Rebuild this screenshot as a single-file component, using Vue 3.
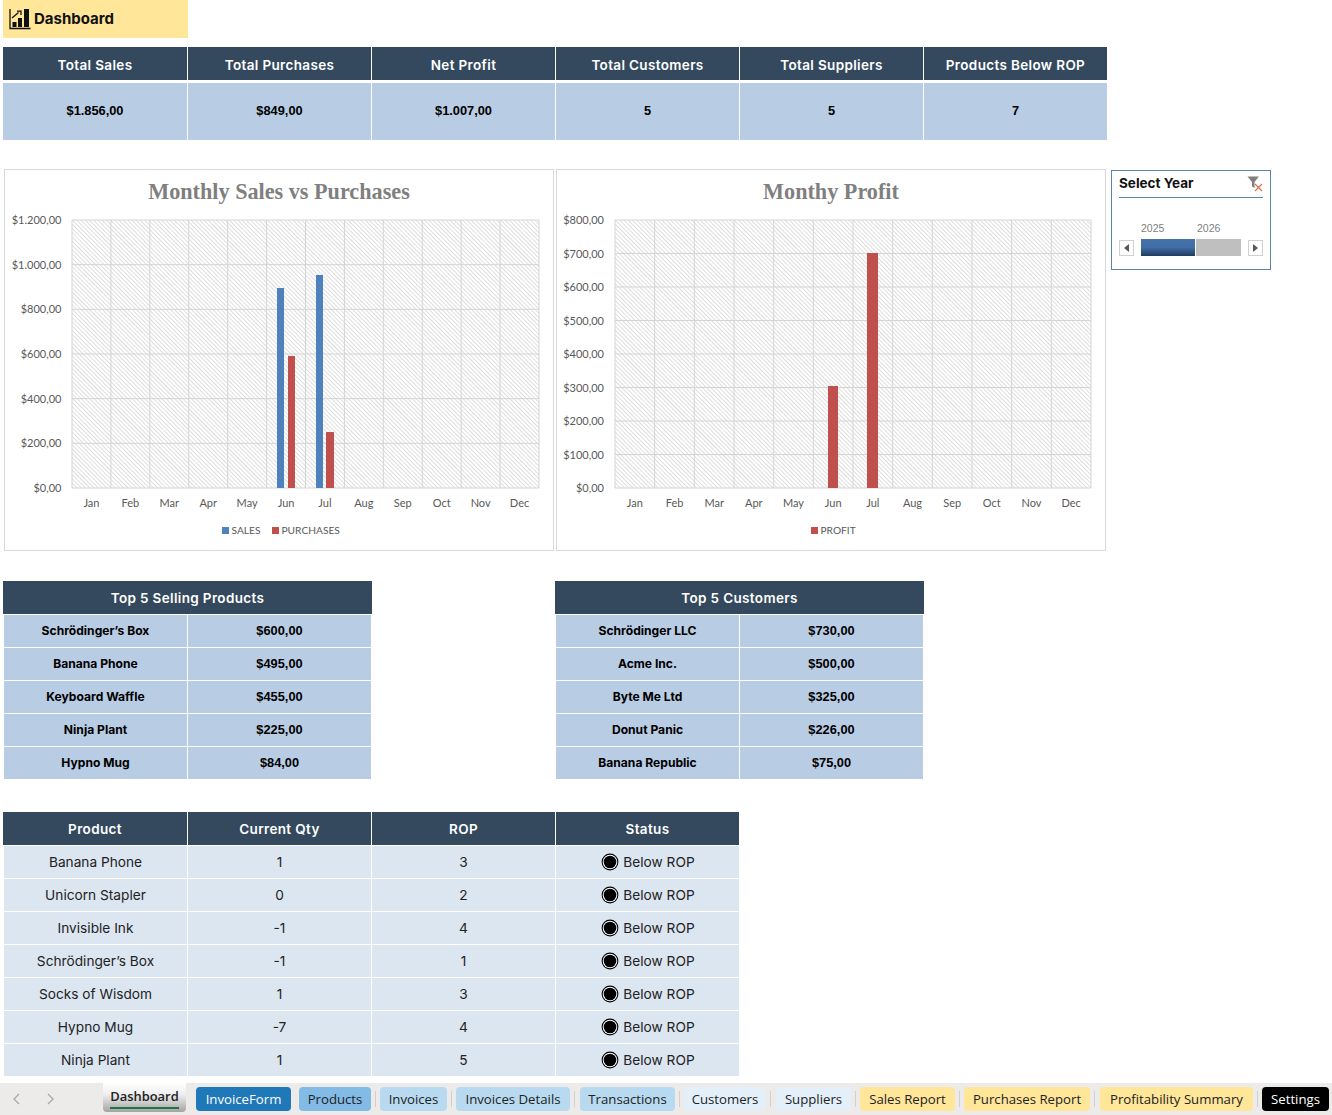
<script setup>
const kpiHead = ['Total Sales', 'Total Purchases', 'Net Profit', 'Total Customers', 'Total Suppliers', 'Products Below ROP']
const kpiVals = ['$1.856,00', '$849,00', '$1.007,00', '5', '5', '7']
const months = ['Jan', 'Feb', 'Mar', 'Apr', 'May', 'Jun', 'Jul', 'Aug', 'Sep', 'Oct', 'Nov', 'Dec']

function buildChart(left, right, labels) {
  const top = 220
  const bottom = 488
  const colW = (right - left) / 12
  const step = (bottom - top) / (labels.length - 1)
  return {
    left, right, top, bottom,
    vLines: Array.from({ length: 13 }, (_, i) => left + i * colW),
    hLines: labels.map((l, i) => ({ y: top + i * step, label: l })),
    months: months.map((m, i) => ({ m, x: left + (i + 0.5) * colW }))
  }
}
const c1 = buildChart(72, 539, ['$1.200,00', '$1.000,00', '$800,00', '$600,00', '$400,00', '$200,00', '$0,00'])
const c2 = buildChart(615, 1091, ['$800,00', '$700,00', '$600,00', '$500,00', '$400,00', '$300,00', '$200,00', '$100,00', '$0,00'])

const bars1 = [
  { x: 277, w: 7, y: 288, c: '#4F81BD' },
  { x: 288, w: 7, y: 356, c: '#C0504D' },
  { x: 316, w: 7, y: 275, c: '#4F81BD' },
  { x: 326, w: 8, y: 432, c: '#C0504D' }
]
const bars2 = [
  { x: 828, w: 10, y: 386, c: '#C0504D' },
  { x: 867, w: 11, y: 253, c: '#C0504D' }
]

const topProducts = [
  ['Schrödinger’s Box', '$600,00'], ['Banana Phone', '$495,00'], ['Keyboard Waffle', '$455,00'],
  ['Ninja Plant', '$225,00'], ['Hypno Mug', '$84,00']
]
const topCustomers = [
  ['Schrödinger LLC', '$730,00'], ['Acme Inc.', '$500,00'], ['Byte Me Ltd', '$325,00'],
  ['Donut Panic', '$226,00'], ['Banana Republic', '$75,00']
]
const stock = [
  ['Banana Phone', '1', '3'], ['Unicorn Stapler', '0', '2'], ['Invisible Ink', '-1', '4'],
  ['Schrödinger’s Box', '-1', '1'], ['Socks of Wisdom', '1', '3'], ['Hypno Mug', '-7', '4'], ['Ninja Plant', '1', '5']
]
const tabs = [
  { t: 'InvoiceForm', w: 95, cls: 'blue', gap: 8 },
  { t: 'Products', w: 72, cls: 'mid', gap: 9 },
  { t: 'Invoices', w: 67, cls: 'pale', gap: 9 },
  { t: 'Invoices Details', w: 114, cls: 'pale', gap: 10 },
  { t: 'Transactions', w: 95, cls: 'pale', gap: 9 },
  { t: 'Customers', w: 82, cls: 'faint', gap: 10 },
  { t: 'Suppliers', w: 75, cls: 'faint', gap: 9 },
  { t: 'Sales Report', w: 95, cls: 'gold', gap: 9 },
  { t: 'Purchases Report', w: 126, cls: 'gold', gap: 10 },
  { t: 'Profitability Summary', w: 153, cls: 'gold', gap: 9 },
  { t: 'Settings', w: 67, cls: 'black', gap: 0 }
]
</script>

<template>
  <div class="page">
    <div class="title">
      <svg class="title-icon" viewBox="0 0 22 22" width="22" height="22">
        <path d="M1 1V20.5H21.5" fill="none" stroke="#111" stroke-width="1.3" />
        <rect x="3.5" y="14" width="4" height="5" fill="#111" />
        <rect x="9" y="10" width="4" height="9" fill="#111" />
        <rect x="15" y="1" width="5" height="18" fill="#111" />
        <path d="M3 10L9.5 4.5" fill="none" stroke="#111" stroke-width="1.3" />
        <path d="M8 3.2H12V7" fill="none" stroke="#111" stroke-width="1.3" />
      </svg>
      <span>Dashboard</span>
    </div>

    <div class="kpi">
      <div v-for="h in kpiHead" :key="h" class="head kpi-head">{{ h }}</div>
      <div v-for="(v, i) in kpiVals" :key="i" class="kpi-val">{{ v }}</div>
    </div>

    <div class="charts">
      <div class="chart">
        <svg viewBox="4 169 550 382" width="550" height="382">
          <defs>
            <pattern id="hatch1" width="3" height="3" patternUnits="userSpaceOnUse" patternTransform="rotate(-45)">
              <rect width="3" height="3" fill="#fff" />
              <rect x="0" width="1" height="3" fill="#dedede" />
            </pattern>
          </defs>
          <text x="279" y="199" class="ch-title" text-anchor="middle">Monthly Sales vs Purchases</text>
          <rect :x="c1.left" :y="c1.top" :width="c1.right - c1.left" :height="c1.bottom - c1.top" fill="url(#hatch1)" />
          <line v-for="x in c1.vLines" :key="x" :x1="x" :x2="x" :y1="c1.top" :y2="c1.bottom" class="grid" />
          <line v-for="h in c1.hLines" :key="h.y" :x1="c1.left" :x2="c1.right" :y1="h.y" :y2="h.y" class="grid" />
          <text v-for="h in c1.hLines" :key="h.label" x="61.5" :y="h.y + 4" class="ax" text-anchor="end">{{ h.label }}</text>
          <text v-for="m in c1.months" :key="m.m" :x="m.x" y="507" class="ax" text-anchor="middle">{{ m.m }}</text>
          <rect v-for="b in bars1" :key="b.x" :x="b.x" :y="b.y" :width="b.w" :height="c1.bottom - b.y" :fill="b.c" />
          <rect x="222" y="527" width="7" height="7" fill="#4F81BD" />
          <text x="231.5" y="534" class="ax leg">SALES</text>
          <rect x="272" y="527" width="7" height="7" fill="#C0504D" />
          <text x="281.5" y="534" class="ax leg">PURCHASES</text>
        </svg>
      </div>
      <div class="chart">
        <svg viewBox="556 169 550 382" width="550" height="382">
          <defs>
            <pattern id="hatch2" width="3" height="3" patternUnits="userSpaceOnUse" patternTransform="rotate(-45)">
              <rect width="3" height="3" fill="#fff" />
              <rect x="0" width="1" height="3" fill="#dedede" />
            </pattern>
          </defs>
          <text x="831" y="199" class="ch-title" text-anchor="middle">Monthy Profit</text>
          <rect :x="c2.left" :y="c2.top" :width="c2.right - c2.left" :height="c2.bottom - c2.top" fill="url(#hatch2)" />
          <line v-for="x in c2.vLines" :key="x" :x1="x" :x2="x" :y1="c2.top" :y2="c2.bottom" class="grid" />
          <line v-for="h in c2.hLines" :key="h.y" :x1="c2.left" :x2="c2.right" :y1="h.y" :y2="h.y" class="grid" />
          <text v-for="h in c2.hLines" :key="h.label" x="604" :y="h.y + 4" class="ax" text-anchor="end">{{ h.label }}</text>
          <text v-for="m in c2.months" :key="m.m" :x="m.x" y="507" class="ax" text-anchor="middle">{{ m.m }}</text>
          <rect v-for="b in bars2" :key="b.x" :x="b.x" :y="b.y" :width="b.w" :height="c2.bottom - b.y" :fill="b.c" />
          <rect x="811" y="527" width="7" height="7" fill="#C0504D" />
          <text x="820.5" y="534" class="ax leg">PROFIT</text>
        </svg>
      </div>
      <div class="slicer">
        <div class="sl-head">
          <span>Select Year</span>
          <svg width="16" height="17" viewBox="0 0 16 17">
            <path d="M0.5 0.5H12L7.5 6V12L5 10.5V6Z" fill="#808080" />
            <path d="M8 8L15 15M15 8L8 15" stroke="#D9734A" stroke-width="1.2" fill="none" />
          </svg>
        </div>
        <div class="sl-years"><span class="y1">2025</span><span class="y2">2026</span></div>
        <div class="sl-track">
          <div class="sl-btn"><span class="tri-l"></span></div>
          <div class="sl-on"></div>
          <div class="sl-off"></div>
          <div class="sl-btn"><span class="tri-r"></span></div>
        </div>
      </div>
    </div>

    <div class="tops">
      <div class="top5">
        <div class="head span2">Top 5 Selling Products</div>
        <template v-for="r in topProducts" :key="r[0]">
          <div class="cell strong">{{ r[0] }}</div>
          <div class="cell money">{{ r[1] }}</div>
        </template>
      </div>
      <div class="top5">
        <div class="head span2">Top 5 Customers</div>
        <template v-for="r in topCustomers" :key="r[0]">
          <div class="cell strong">{{ r[0] }}</div>
          <div class="cell money">{{ r[1] }}</div>
        </template>
      </div>
    </div>

    <div class="stock">
      <div class="head">Product</div>
      <div class="head">Current Qty</div>
      <div class="head">ROP</div>
      <div class="head last">Status</div>
      <template v-for="r in stock" :key="r[0]">
        <div class="row">{{ r[0] }}</div>
        <div class="row">{{ r[1] }}</div>
        <div class="row">{{ r[2] }}</div>
        <div class="row status">
          <svg width="18" height="18" viewBox="0 0 18 18">
            <circle cx="9" cy="9" r="8.4" fill="#000" />
            <circle cx="9" cy="9" r="7.3" fill="#fff" />
            <circle cx="9" cy="9" r="6.3" fill="#000" />
          </svg>
          <span>Below ROP</span>
        </div>
      </template>
    </div>

    <div class="tabbar">
      <div class="nav">
        <svg width="10" height="12" viewBox="0 0 10 12"><path d="M7 1L2 6L7 11" fill="none" stroke="#a6a6a6" stroke-width="1.2" /></svg>
        <svg width="10" height="12" viewBox="0 0 10 12"><path d="M3 1L8 6L3 11" fill="none" stroke="#a6a6a6" stroke-width="1.2" /></svg>
      </div>
      <div class="tab-active"><span>Dashboard</span></div>
      <div class="tab-list">
        <div
          v-for="t in tabs"
          :key="t.t"
          class="tab"
          :class="t.cls"
          :style="{ width: t.w + 'px', marginRight: t.gap + 'px' }"
        >{{ t.t }}</div>
      </div>
    </div>
  </div>
</template>

<style scoped>
.page {
  width: 1332px;
  height: 1115px;
  display: flex;
  flex-direction: column;
  overflow: hidden;
  background: #fff;
  font-family: Inter, "Noto Sans", sans-serif;
}
.title {
  margin-left: 3px;
  width: 185px;
  height: 38px;
  background: #FFE699;
  display: flex;
  align-items: center;
  gap: 3px;
  padding-left: 6px;
  padding-bottom: 1px;
  box-sizing: border-box;
  font: 700 15px Inter, sans-serif;
  color: #111;
}
.title-icon { flex: none; }
.kpi {
  margin: 9px 0 0 3px;
  display: grid;
  grid-template-columns: 185px 184px 184px 184px 184px 183px;
  grid-template-rows: 33px 60px;
}
.head {
  background: #34495E;
  color: #fff;
  font: 600 13.5px Inter, sans-serif;
  letter-spacing: 0.35px;
  display: flex;
  align-items: center;
  justify-content: center;
  border-right: 1px solid #fff;
  box-sizing: border-box;
}
.kpi-head { padding-top: 2px; }
.kpi-head:nth-child(6), .head.last { border-right: 0; }
.kpi-val {
  background: #B8CCE4;
  margin-top: 3px;
  padding-bottom: 3px;
  box-sizing: border-box;
  border-right: 1px solid #fff;
  display: flex;
  align-items: center;
  justify-content: center;
  font: 700 12.8px "Liberation Sans", sans-serif;
  color: #000;
}
.kpi-val:last-child { border-right: 0; }
.charts {
  margin: 29px 0 0 4px;
  display: flex;
  align-items: flex-start;
  gap: 2px;
}
.chart {
  width: 550px;
  height: 382px;
  flex: none;
}
.chart svg {
  display: block;
  outline: 1px solid #D9D9D9;
  outline-offset: -1px;
}
.ch-title {
  font: 700 22.2px "Liberation Serif", serif;
  fill: #7F7F7F;
}
.grid { stroke: #D5D5D5; stroke-width: 1; }
.ax {
  font: 400 11px Lato, sans-serif;
  fill: #595959;
}
.leg { font-size: 10.2px; }
.slicer {
  margin: 1px 0 0 3px;
  width: 160px;
  height: 100px;
  box-sizing: border-box;
  border: 1px solid #5B85AA;
  padding: 0 7px;
}
.sl-head {
  height: 27px;
  border-bottom: 1px solid #5B85AA;
  display: flex;
  align-items: center;
  justify-content: space-between;
  font: 700 13.5px Inter, sans-serif;
  color: #111;
  padding-bottom: 2px;
  box-sizing: border-box;
}
.sl-head svg { margin-top: 3px; }
.sl-years {
  margin-top: 24px;
  height: 13px;
  display: flex;
  font: 400 10.5px "Liberation Sans", sans-serif;
  color: #808080;
  padding-left: 22px;
}
.y1 { width: 56px; }
.sl-track {
  margin-top: 4px;
  display: flex;
  align-items: center;
}
.sl-btn {
  width: 15px;
  height: 16px;
  box-sizing: border-box;
  border: 1px solid #D0D0D0;
  display: flex;
  align-items: center;
  justify-content: center;
  flex: none;
}
.tri-l { border: 4px solid transparent; border-left: 0; border-right: 5px solid #595959; }
.tri-r { border: 4px solid transparent; border-right: 0; border-left: 5px solid #595959; }
.sl-on {
  margin-left: 7px;
  width: 54px;
  height: 17px;
  background: linear-gradient(#4472A8 0%, #3F6DA5 50%, #1F3A60 100%);
}
.sl-off {
  margin-left: 1px;
  width: 45px;
  height: 17px;
  background: #BFBFBF;
  margin-right: 7px;
}
.tops {
  margin: 30px 0 0 3px;
  display: flex;
  gap: 183px;
}
.top5 {
  width: 369px;
  display: grid;
  grid-template-columns: 185px 184px;
  grid-auto-rows: 33px;
}
.span2 { grid-column: 1 / 3; border-right: 0; }
.cell {
  background: #B8CCE4;
  border-top: 1px solid #fff;
  padding-bottom: 2px;
  box-sizing: border-box;
  display: flex;
  align-items: center;
  justify-content: center;
  color: #000;
}
.strong { font: 700 12.1px Inter, sans-serif; margin-left: 1px; border-right: 1px solid #fff; }
.money { font: 700 12.8px "Liberation Sans", sans-serif; margin-right: 1px; }
.stock {
  margin: 33px 0 0 3px;
  display: grid;
  grid-template-columns: 185px 184px 184px 183px;
  grid-auto-rows: 33px;
}
.row {
  background: #DCE6F1;
  border-right: 1px solid #fff;
  border-top: 1px solid #fff;
  box-sizing: border-box;
  display: flex;
  align-items: center;
  justify-content: center;
  font: 400 13.7px Inter, sans-serif;
  color: #222;
}
.row:nth-child(4n+1) { margin-left: 1px; }
.status { gap: 4px; border-right: 0; padding-left: 1px; }
.tabbar {
  margin-top: auto;
  height: 32px;
  background: #EDEBE9;
  display: flex;
  align-items: flex-start;
  flex: none;
}
.nav {
  width: 103px;
  flex: none;
  padding: 10px 0 0 12px;
  box-sizing: border-box;
  display: flex;
  gap: 23px;
}
.tab-active {
  width: 83px;
  height: 29px;
  background: linear-gradient(#fff 0%, #eee 40%, #a3a3a3 100%);
  border-radius: 0 0 4px 4px;
  box-sizing: border-box;
  padding: 3px 7px 0;
  flex: none;
}
.tab-active span {
  display: block;
  font: 600 12.9px "Open Sans", sans-serif;
  text-align: center;
  color: #222;
  border-bottom: 2px solid #217346;
  height: 21px;
  line-height: 20px;
}
.tab-list {
  margin-left: 10px;
  display: flex;
  padding-top: 4px;
}
.tab {
  height: 24px;
  border-radius: 4px;
  display: flex;
  align-items: center;
  justify-content: center;
  font: 400 13.2px "Open Sans", sans-serif;
  color: #222;
  flex: none;
  position: relative;
}
.tab:not(:first-child):not(:last-child)::after {
  content: "";
  position: absolute;
  right: -5px;
  top: 4px;
  width: 1px;
  height: 16px;
  background: #d2d0ce;
}
.blue { background: #1F78B8; color: #fff; }
.mid { background: #82BBE6; }
.pale { background: #B8DAF0; }
.faint { background: #E3F0FA; }
.gold { background: #FFE699; }
.black { background: #000; color: #fff; }
</style>
